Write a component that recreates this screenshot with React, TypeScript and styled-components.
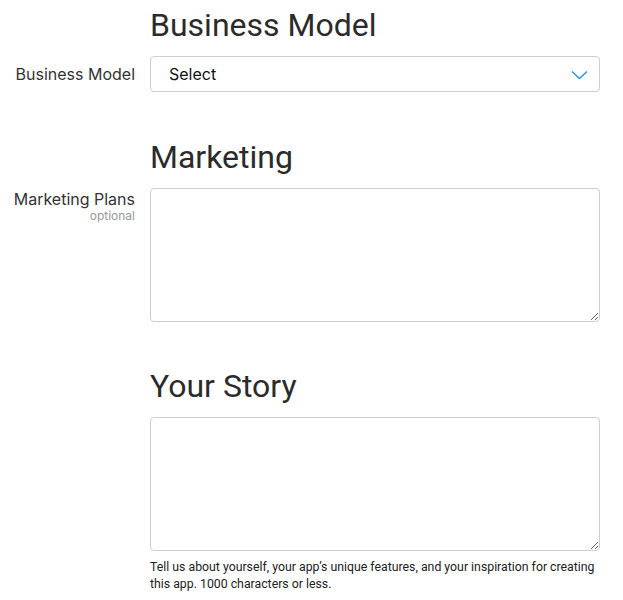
import React from "react";
import styled, { createGlobalStyle } from "styled-components";

const GlobalStyle = createGlobalStyle`
  html, body {
    margin: 0;
    padding: 0;
    background: #fff;
  }
  body {
    font-family: Inter, "Noto Sans", "Liberation Sans", sans-serif;
    color: #333;
  }
`;

const Page = styled.div`
  padding-top: 5px;
  width: 623px;
`;

const Section = styled.section<{ $gap: number }>`
  display: grid;
  grid-template-columns: 135px 450px;
  column-gap: 15px;
  row-gap: 11px;
  margin-top: ${(p) => p.$gap}px;
`;

const Heading = styled.h2`
  grid-column: 2;
  margin: 0;
  font-family: Roboto, Inter, sans-serif;
  font-size: 32px;
  line-height: 40px;
  font-weight: 400;
  color: #2b2b2b;
`;

const Label = styled.label<{ $top: number }>`
  grid-column: 1;
  display: flex;
  flex-direction: column;
  align-items: flex-end;
  padding-top: ${(p) => p.$top}px;
  font-size: 16px;
  line-height: 20px;
  color: #333;
  text-align: right;
`;

const Optional = styled.span`
  font-size: 12px;
  line-height: 14px;
  color: #999;
`;

const Field = styled.div`
  grid-column: 2;
  display: flex;
  flex-direction: column;
`;

const SelectBox = styled.div`
  position: relative;
  height: 36px;
  box-sizing: border-box;
  border: 1px solid #cfcfcf;
  border-radius: 4px;
  display: flex;
  align-items: center;
  padding: 0 18px;
  font-size: 16px;
  color: #111;
  cursor: pointer;
`;

const Chevron = styled.svg`
  position: absolute;
  right: 11px;
  top: 13px;
`;

const TextArea = styled.textarea`
  display: block;
  width: 100%;
  height: 134px;
  box-sizing: border-box;
  border: 1px solid #cfcfcf;
  border-radius: 4px;
  padding: 8px 12px;
  font-family: inherit;
  font-size: 16px;
  resize: vertical;
  outline: none;
`;

const Help = styled.p`
  margin: 8px 0 0;
  font-family: Roboto, Inter, sans-serif;
  font-size: 12.3px;
  line-height: 17px;
  color: #222;
`;

export default function App() {
  return (
    <Page>
      <GlobalStyle />
      <Section $gap={0}>
        <Heading>Business Model</Heading>
        <Label $top={8}>Business Model</Label>
        <Field>
          <SelectBox>
            Select
            <Chevron width="17" height="10" viewBox="0 0 17 10">
              <path d="M1 1.5 L8.5 8.5 L16 1.5" fill="none" stroke="#2f9ad8" strokeWidth="1.6" />
            </Chevron>
          </SelectBox>
        </Field>
      </Section>

      <Section $gap={45}>
        <Heading>Marketing</Heading>
        <Label $top={1}>
          Marketing Plans
          <Optional>optional</Optional>
        </Label>
        <Field>
          <TextArea />
        </Field>
      </Section>

      <Section $gap={44}>
        <Heading>Your Story</Heading>
        <Field>
          <TextArea />
          <Help>
            Tell us about yourself, your app’s unique features, and your inspiration for creating
            this app. 1000 characters or less.
          </Help>
        </Field>
      </Section>
    </Page>
  );
}
